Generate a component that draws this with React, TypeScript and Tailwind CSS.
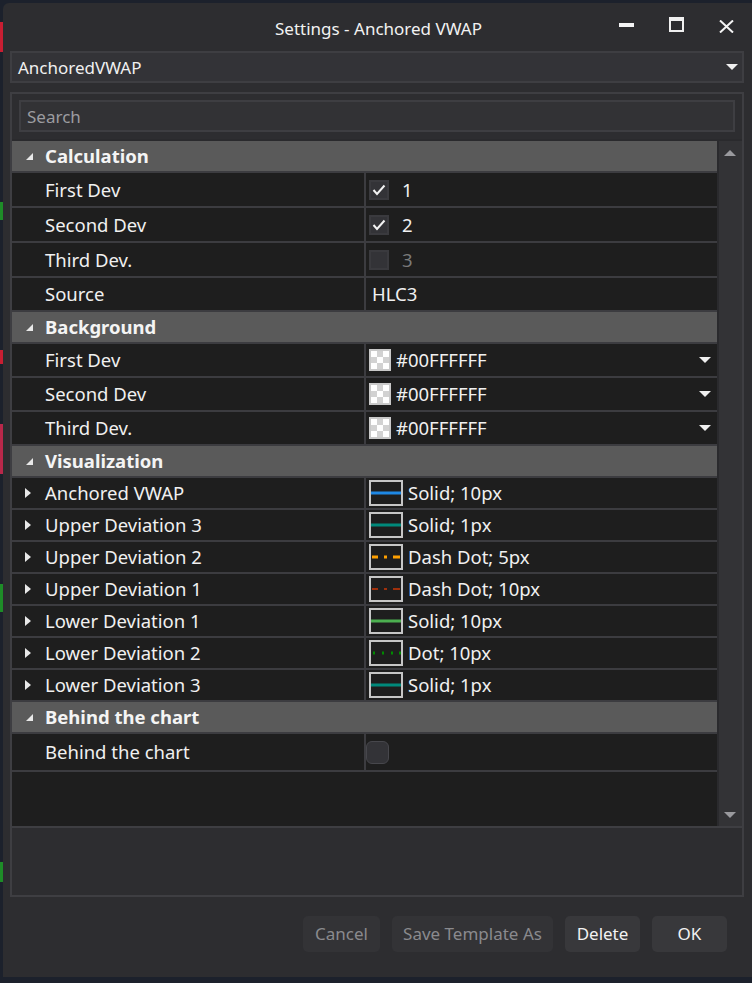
import React from "react";

type LineKind = "solid" | "dashdot" | "dot";

const FONT = { fontFamily: '"Noto Sans", "Open Sans", sans-serif' };

function CategoryArrow() {
  return (
    <svg width="9" height="9" viewBox="0 0 9 9" className="shrink-0">
      <polygon points="8,1 8,8 1,8" fill="#e8e8e8" />
    </svg>
  );
}

function ExpandArrow() {
  return (
    <svg width="6" height="10" viewBox="0 0 6 10" className="shrink-0">
      <polygon points="0,0 6,5 0,10" fill="#e8e8e8" />
    </svg>
  );
}

function DownArrow({ color = "#f0f0f0", w = 12 }: { color?: string; w?: number }) {
  return (
    <svg width={w} height={w / 2} viewBox="0 0 12 6">
      <polygon points="0,0 12,0 6,6" fill={color} />
    </svg>
  );
}

function UpArrow({ color = "#9a9a9e" }: { color?: string }) {
  return (
    <svg width="12" height="6" viewBox="0 0 12 6">
      <polygon points="0,6 12,6 6,0" fill={color} />
    </svg>
  );
}

function Checkbox({ checked }: { checked: boolean }) {
  return (
    <div className="w-[20px] h-[20px] bg-[#333337] border-2 border-[#3a3a3e] flex items-center justify-center shrink-0">
      {checked && (
        <svg width="14" height="12" viewBox="0 0 14 12">
          <polyline points="1.5,6 5,10 12.5,1.5" fill="none" stroke="#f2f2f2" strokeWidth="2" />
        </svg>
      )}
    </div>
  );
}

function Swatch() {
  return (
    <svg width="22" height="22" viewBox="0 0 22 22" className="shrink-0">
      <rect x="0" y="0" width="22" height="22" fill="#c9c9c9" />
      <rect x="2" y="2" width="18" height="18" fill="#ffffff" />
      <rect x="8" y="2" width="6" height="6" fill="#d2d2d2" />
      <rect x="2" y="8" width="6" height="6" fill="#d2d2d2" />
      <rect x="14" y="8" width="6" height="6" fill="#d2d2d2" />
      <rect x="8" y="14" width="6" height="6" fill="#d2d2d2" />
    </svg>
  );
}

function LinePreview({ kind, color, thick }: { kind: LineKind; color: string; thick: number }) {
  const y = 11 - thick / 2;
  return (
    <svg width="34" height="26" viewBox="0 0 34 26" className="shrink-0">
      <rect x="1" y="1" width="32" height="24" fill="#1e1e1e" stroke="#c6c6c6" strokeWidth="2" />
      {kind === "solid" && <rect x="2" y={y + 2} width="30" height={thick} fill={color} />}
      {kind === "dashdot" && (
        <g fill={color}>
          <rect x="3" y={y + 2} width="6" height={thick} />
          <rect x="15" y={y + 2} width="3" height={thick} />
          <rect x="24" y={y + 2} width="7" height={thick} />
        </g>
      )}
      {kind === "dot" && (
        <g fill={color}>
          <rect x="4" y={y + 2} width="2" height={thick} />
          <rect x="13" y={y + 2} width="2" height={thick} />
          <rect x="22" y={y + 2} width="2" height={thick} />
          <rect x="30" y={y + 2} width="2" height={thick} />
        </g>
      )}
    </svg>
  );
}

function Category({ title }: { title: string }) {
  return (
    <div className="h-[30px] bg-[#5a5a5a] flex items-center gap-[11px] pl-[13px] text-[18.5px] font-bold text-[#f4f4f4]">
      <CategoryArrow />
      <span>{title}</span>
    </div>
  );
}

function Row({
  name,
  h,
  expandable,
  children,
}: {
  name: string;
  h: string;
  expandable?: boolean;
  children: React.ReactNode;
}) {
  return (
    <div className={`${h} flex bg-[#3c3c40] gap-[2px]`}>
      <div className="w-[352px] bg-[#1e1e1e] flex items-center pl-[13px] text-[18.5px] text-[#f0f0f0]">
        <div className="w-[20px] flex">{expandable && <ExpandArrow />}</div>
        <span>{name}</span>
      </div>
      <div className="flex-1 bg-[#1e1e1e] flex items-center pl-[3px] pr-[6px] text-[18.5px] text-[#f0f0f0]">
        {children}
      </div>
    </div>
  );
}

const visual: { name: string; kind: LineKind; color: string; thick: number; label: string }[] = [
  { name: "Anchored VWAP", kind: "solid", color: "#1e88e5", thick: 3, label: "Solid; 10px" },
  { name: "Upper Deviation 3", kind: "solid", color: "#00897b", thick: 3, label: "Solid; 1px" },
  { name: "Upper Deviation 2", kind: "dashdot", color: "#ffa000", thick: 3, label: "Dash Dot; 5px" },
  { name: "Upper Deviation 1", kind: "dashdot", color: "#a0300c", thick: 2, label: "Dash Dot; 10px" },
  { name: "Lower Deviation 1", kind: "solid", color: "#4caf50", thick: 3, label: "Solid; 10px" },
  { name: "Lower Deviation 2", kind: "dot", color: "#008a00", thick: 3, label: "Dot; 10px" },
  { name: "Lower Deviation 3", kind: "solid", color: "#00897b", thick: 3, label: "Solid; 1px" },
];

export default function App() {
  return (
    <div className="w-[752px] h-[983px] bg-[#1c212c] flex overflow-hidden" style={FONT}>
      {/* chart peeking out on the left */}
      <div className="w-[3px] flex flex-col">
        <div className="h-[22px]" />
        <div className="h-[30px] bg-[#c81e32]" />
        <div className="h-[150px]" />
        <div className="h-[18px] bg-[#1e8c28]" />
        <div className="h-[130px]" />
        <div className="h-[14px] bg-[#c81e32]" />
        <div className="h-[60px]" />
        <div className="h-[50px] bg-[#b8284a]" />
        <div className="h-[110px]" />
        <div className="h-[28px] bg-[#1e8c28]" />
        <div className="h-[250px]" />
        <div className="h-[20px] bg-[#1e8c28]" />
      </div>

      <div className="flex-1 flex flex-col">
        <div className="h-[3px]" />
        <div className="h-[974px] bg-[#2d2d30] rounded-tl-[6px] flex flex-col px-[7px] text-[#f0f0f0]">
          {/* title bar */}
          <div className="h-[48px] flex items-center relative">
            <div className="flex-1 text-center text-[17px] text-[#f2f2f2] pl-[2px] pt-[3px]">
              Settings - Anchored VWAP
            </div>
            <div className="absolute right-[-6px] top-0 h-[48px] flex items-center">
              <div className="w-[50px] flex justify-center pb-[4px]">
                <div className="w-[15px] h-[4px] bg-[#f4f4f4]" />
              </div>
              <div className="w-[50px] flex justify-center pb-[6px]">
                <div className="w-[15px] h-[15px] border-2 border-t-4 border-[#f0f0f0]" />
              </div>
              <div className="w-[50px] flex justify-center pb-[2px]">
                <svg width="15" height="13" viewBox="0 0 15 13">
                  <path d="M1 0.5 L14 12.5 M14 0.5 L1 12.5" stroke="#f4f4f4" strokeWidth="2" />
                </svg>
              </div>
            </div>
          </div>

          {/* indicator select */}
          <div className="h-[32px] border-2 border-[#3e3e42] bg-[#333337] flex items-center justify-between pl-[6px] pr-[4px] text-[17px] mr-[1px]">
            <span className="pt-[2px]">AnchoredVWAP</span>
            <DownArrow />
          </div>

          {/* property panel */}
          <div className="mt-[9px] h-[805px] border-2 border-[#3e3e42] flex flex-col mr-[1px]">
            <div className="px-[7px] pt-[6px] pb-[7px]">
              <div className="h-[32px] border-2 border-[#3e3e42] bg-[#323235] flex items-center pl-[6px] text-[17px] text-[#9c9ca0]">
                <span className="pt-[1px]">Search</span>
              </div>
            </div>

            <div className="h-[687px] border-t-2 border-[#2a2a2d] flex">
              <div className="flex-1 flex flex-col gap-[2px] bg-[#3c3c40]">
                <Category title="Calculation" />
                <Row name="First Dev" h="h-[33px]">
                  <Checkbox checked />
                  <span className="ml-[13px]">1</span>
                </Row>
                <Row name="Second Dev" h="h-[33px]">
                  <Checkbox checked />
                  <span className="ml-[13px]">2</span>
                </Row>
                <Row name="Third Dev." h="h-[33px]">
                  <Checkbox checked={false} />
                  <span className="ml-[13px] text-[#7a7a7a]">3</span>
                </Row>
                <Row name="Source" h="h-[32px]">
                  <span className="ml-[3px]">HLC3</span>
                </Row>

                <Category title="Background" />
                {["First Dev", "Second Dev", "Third Dev."].map((n) => (
                  <Row key={n} name={n} h="h-[32px]">
                    <Swatch />
                    <span className="ml-[5px] flex-1">#00FFFFFF</span>
                    <DownArrow w={12} />
                  </Row>
                ))}

                <Category title="Visualization" />
                {visual.map((v) => (
                  <Row key={v.name} name={v.name} h="h-[30px]" expandable>
                    <LinePreview kind={v.kind} color={v.color} thick={v.thick} />
                    <span className="ml-[5px]">{v.label}</span>
                  </Row>
                ))}

                <Category title="Behind the chart" />
                <div className="h-[36px] flex bg-[#3c3c40] gap-[2px]">
                  <div className="w-[352px] bg-[#1e1e1e] flex items-center pl-[33px] text-[18.5px] text-[#f0f0f0]">
                    Behind the chart
                  </div>
                  <div className="flex-1 bg-[#1e1e1e] flex items-center">
                    <div className="w-[23px] h-[23px] rounded-[6px] bg-[#333337] border border-[#47474c]" />
                  </div>
                </div>
                <div className="flex-1 bg-[#1e1e1e]" />
              </div>

              {/* scrollbar */}
              <div className="w-[25px] bg-[#333336] border-l-2 border-[#2a2a2d] flex flex-col items-center justify-between pt-[9px] pb-[8px] pr-[2px]">
                <UpArrow />
                <DownArrow color="#9a9a9e" />
              </div>
            </div>

            {/* description area */}
            <div className="flex-1 border-t-2 border-[#3e3e42]" />
          </div>

          {/* buttons */}
          <div className="mt-[19px] flex justify-end gap-[12px] pr-[18px] text-[17px]">
            <div className="w-[77px] h-[36px] rounded-[5px] bg-[#333336] flex items-center justify-center text-[#8a8a8e]">
              Cancel
            </div>
            <div className="w-[161px] h-[36px] rounded-[5px] bg-[#333336] flex items-center justify-center text-[#8a8a8e]">
              Save Template As
            </div>
            <div className="w-[75px] h-[36px] rounded-[5px] bg-[#38383b] flex items-center justify-center text-[#f2f2f2]">
              Delete
            </div>
            <div className="w-[75px] h-[36px] rounded-[5px] bg-[#38383b] flex items-center justify-center text-[#f2f2f2]">
              OK
            </div>
          </div>
        </div>
      </div>
    </div>
  );
}
